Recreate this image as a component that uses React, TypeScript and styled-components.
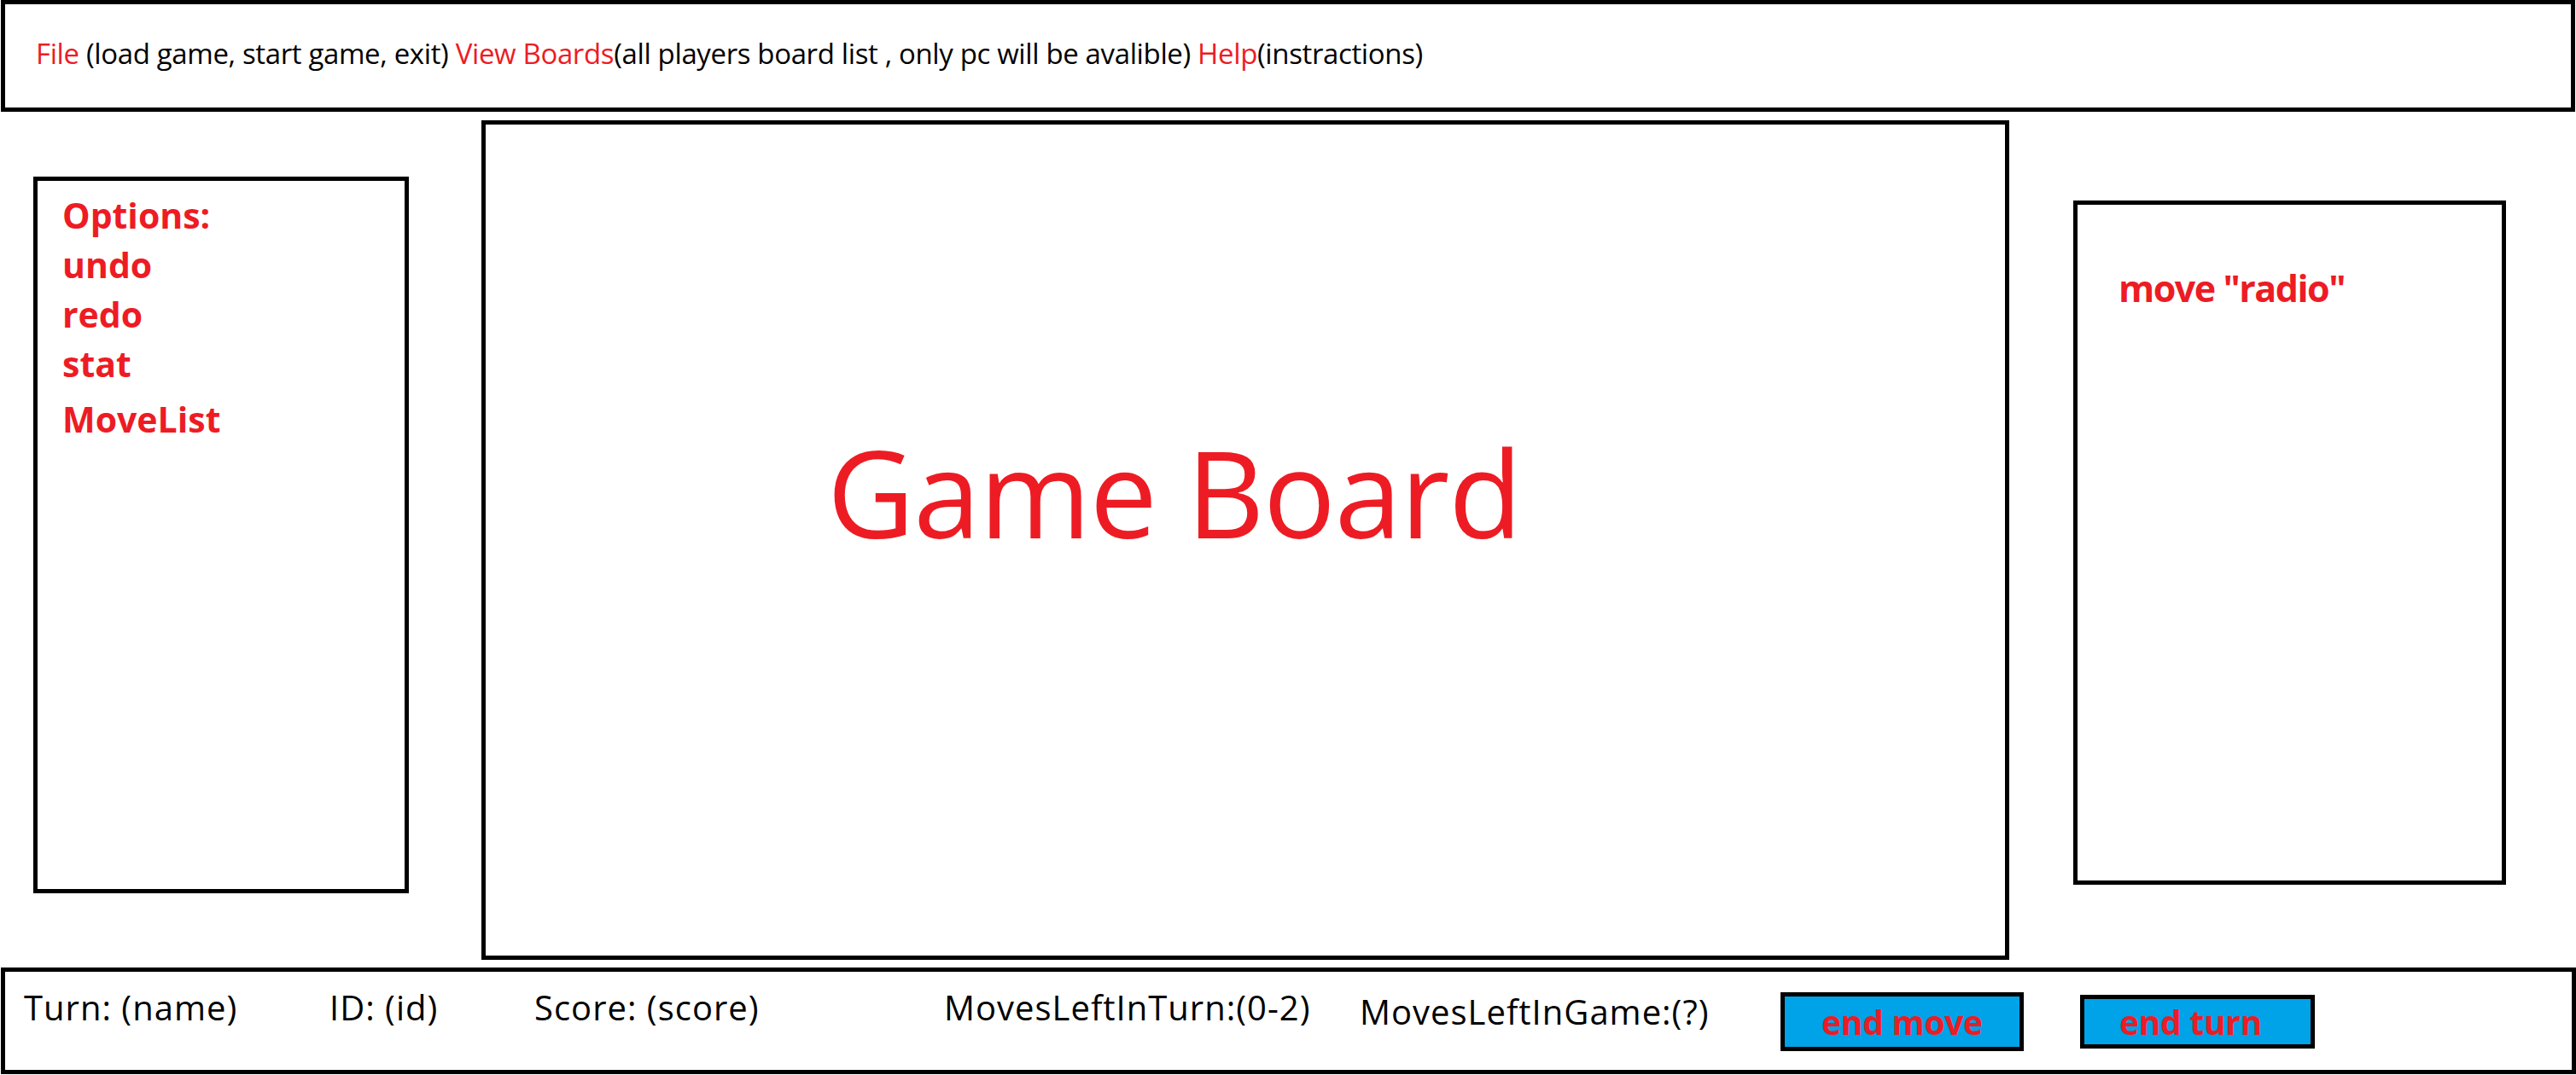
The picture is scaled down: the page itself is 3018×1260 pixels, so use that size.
import styled, { createGlobalStyle } from "styled-components";

const RED = "#ed1c24";

const GlobalStyle = createGlobalStyle`
  html, body {
    margin: 0;
    padding: 0;
    background: #fff;
  }
  body {
    font-family: "Open Sans", "Liberation Sans", sans-serif;
    color: #000;
  }
  * {
    box-sizing: border-box;
  }
`;

const Page = styled.div`
  width: 3018px;
  height: 1260px;
  display: flex;
  flex-direction: column;
`;

const MenuBar = styled.header`
  margin-left: 1px;
  width: 3016px;
  height: 131px;
  border: 5px solid #000;
  padding: 41px 0 0 36px;
  font-size: 33px;
  line-height: 1;
  letter-spacing: -0.37px;
  white-space: nowrap;
`;

const MenuName = styled.span`
  color: ${RED};
`;

const Workspace = styled.main`
  display: flex;
  align-items: flex-start;
  height: 1003px;
  padding-left: 39px;
`;

const Panel = styled.section<{ $w: number; $h: number; $top: number; $left?: number }>`
  flex: none;
  width: ${(p) => p.$w}px;
  height: ${(p) => p.$h}px;
  margin-top: ${(p) => p.$top}px;
  margin-left: ${(p) => p.$left || 0}px;
  border: 5px solid #000;
`;

const OptionList = styled.ul`
  list-style: none;
  margin: 0;
  padding: 11px 0 0 29px;
  color: ${RED};
  font-weight: 700;
  font-size: 41px;
  line-height: 58px;
`;

const OptionItem = styled.li<{ $extra?: number }>`
  margin-top: ${(p) => p.$extra || 0}px;
`;

const BoardLabel = styled.div`
  padding: 360px 0 0 400px;
  color: ${RED};
  font-size: 141px;
  line-height: 1;
  letter-spacing: -1.2px;
  white-space: nowrap;
`;

const RadioLabel = styled.div`
  padding: 76px 0 0 48px;
  color: ${RED};
  font-weight: 700;
  font-size: 43px;
  line-height: 1;
  letter-spacing: -1.5px;
  white-space: nowrap;
`;

const StatusBar = styled.footer`
  margin-left: 1px;
  width: 3017px;
  height: 125px;
  border: 5px solid #000;
  padding-left: 22px;
  display: grid;
  grid-template-columns: 358px 240px 480px 487px 493px 351px auto;
  align-items: start;
`;

const StatusText = styled.span<{ $drop?: number }>`
  padding-top: ${(p) => 22 + (p.$drop || 0)}px;
  font-size: 40px;
  line-height: 1;
  letter-spacing: 1px;
  white-space: nowrap;
`;

const ActionButton = styled.button<{ $w: number; $h: number; $top: number; $nudge?: number }>`
  width: ${(p) => p.$w}px;
  height: ${(p) => p.$h}px;
  margin-top: ${(p) => p.$top}px;
  padding: 0 ${(p) => p.$nudge || 0}px 0 0;
  border: 5px solid #000;
  border-radius: 0;
  background: #00a2e8;
  color: ${RED};
  font-family: "Open Sans", "Liberation Sans", sans-serif;
  font-weight: 700;
  font-size: 39px;
  line-height: 1;
  letter-spacing: -0.3px;
  display: flex;
  align-items: center;
  justify-content: center;
  white-space: nowrap;
`;

const options = ["undo", "redo", "stat"];

export default function App() {
  return (
    <Page>
      <GlobalStyle />
      <MenuBar>
        <MenuName>File</MenuName> (load game, start game, exit){" "}
        <MenuName>View Boards</MenuName>(all players board list , only pc will be avalible){" "}
        <MenuName>Help</MenuName>(instractions)
      </MenuBar>

      <Workspace>
        <Panel $w={440} $h={840} $top={76}>
          <OptionList>
            <OptionItem>Options:</OptionItem>
            {options.map((o) => (
              <OptionItem key={o}>{o}</OptionItem>
            ))}
            <OptionItem $extra={7}>MoveList</OptionItem>
          </OptionList>
        </Panel>

        <Panel $w={1790} $h={984} $top={10} $left={85}>
          <BoardLabel>Game Board</BoardLabel>
        </Panel>

        <Panel $w={507} $h={802} $top={104} $left={75}>
          <RadioLabel>move "radio"</RadioLabel>
        </Panel>
      </Workspace>

      <StatusBar>
        <StatusText>Turn: (name)</StatusText>
        <StatusText>ID: (id)</StatusText>
        <StatusText>Score: (score)</StatusText>
        <StatusText>MovesLeftInTurn:(0-2)</StatusText>
        <StatusText $drop={5}>MovesLeftInGame:(?)</StatusText>
        <ActionButton $w={285} $h={69} $top={24}>end move</ActionButton>
        <ActionButton $w={275} $h={63} $top={27} $nudge={16}>
          end turn
        </ActionButton>
      </StatusBar>
    </Page>
  );
}
